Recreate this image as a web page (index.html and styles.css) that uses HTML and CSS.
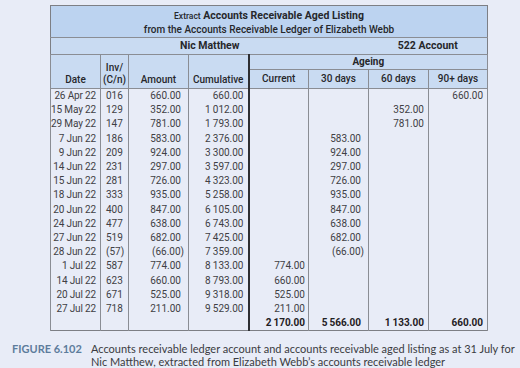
FILE: index.html
```html
<!DOCTYPE html>
<html>
<head>
<meta charset="utf-8">
<link rel="stylesheet" href="styles.css">
</head>
<body>
<div class="page">
  <table class="ledger">
    <colgroup>
      <col class="c-date"><col class="c-inv"><col class="c-num"><col class="c-num"><col class="c-num"><col class="c-num"><col class="c-num"><col class="c-last">
    </colgroup>
    <thead>
      <tr class="t1"><th colspan="8"><span class="small">Extract</span> Accounts Receivable Aged Listing</th></tr>
      <tr class="t2"><th colspan="8">from the Accounts Receivable Ledger of Elizabeth Webb</th></tr>
      <tr class="acct"><th colspan="6">Nic Matthew</th><th colspan="2">522 Account</th></tr>
      <tr class="h1">
        <th rowspan="2" class="bottom">Date</th>
        <th rowspan="2" class="bottom">Inv/<br>(C/n)</th>
        <th rowspan="2" class="bottom">Amount</th>
        <th rowspan="2" class="bottom cum">Cumulative</th>
        <th colspan="4" class="ageing">Ageing</th>
      </tr>
      <tr class="h2"><th>Current</th><th>30 days</th><th>60 days</th><th>90+ days</th></tr>
    </thead>
    <tbody>
      <tr><td class="d">26 Apr 22</td><td class="i">016</td><td class="a">660.00</td><td class="cu">660.00</td><td class="cur"></td><td class="d30"></td><td class="d60"></td><td class="d90">660.00</td></tr>
      <tr><td class="d">15 May 22</td><td class="i">129</td><td class="a">352.00</td><td class="cu">1&thinsp;012.00</td><td class="cur"></td><td class="d30"></td><td class="d60">352.00</td><td class="d90"></td></tr>
      <tr><td class="d">29 May 22</td><td class="i">147</td><td class="a">781.00</td><td class="cu">1&thinsp;793.00</td><td class="cur"></td><td class="d30"></td><td class="d60">781.00</td><td class="d90"></td></tr>
      <tr><td class="d">7 Jun 22</td><td class="i">186</td><td class="a">583.00</td><td class="cu">2&thinsp;376.00</td><td class="cur"></td><td class="d30">583.00</td><td class="d60"></td><td class="d90"></td></tr>
      <tr><td class="d">9 Jun 22</td><td class="i">209</td><td class="a">924.00</td><td class="cu">3&thinsp;300.00</td><td class="cur"></td><td class="d30">924.00</td><td class="d60"></td><td class="d90"></td></tr>
      <tr><td class="d">14 Jun 22</td><td class="i">231</td><td class="a">297.00</td><td class="cu">3&thinsp;597.00</td><td class="cur"></td><td class="d30">297.00</td><td class="d60"></td><td class="d90"></td></tr>
      <tr><td class="d">15 Jun 22</td><td class="i">281</td><td class="a">726.00</td><td class="cu">4&thinsp;323.00</td><td class="cur"></td><td class="d30">726.00</td><td class="d60"></td><td class="d90"></td></tr>
      <tr><td class="d">18 Jun 22</td><td class="i">333</td><td class="a">935.00</td><td class="cu">5&thinsp;258.00</td><td class="cur"></td><td class="d30">935.00</td><td class="d60"></td><td class="d90"></td></tr>
      <tr><td class="d">20 Jun 22</td><td class="i">400</td><td class="a">847.00</td><td class="cu">6&thinsp;105.00</td><td class="cur"></td><td class="d30">847.00</td><td class="d60"></td><td class="d90"></td></tr>
      <tr><td class="d">24 Jun 22</td><td class="i">477</td><td class="a">638.00</td><td class="cu">6&thinsp;743.00</td><td class="cur"></td><td class="d30">638.00</td><td class="d60"></td><td class="d90"></td></tr>
      <tr><td class="d">27 Jun 22</td><td class="i">519</td><td class="a">682.00</td><td class="cu">7&thinsp;425.00</td><td class="cur"></td><td class="d30">682.00</td><td class="d60"></td><td class="d90"></td></tr>
      <tr><td class="d">28 Jun 22</td><td class="i">(57)</td><td class="a">(66.00<span class="cp">)</span></td><td class="cu">7&thinsp;359.00</td><td class="cur"></td><td class="d30">(66.00<span class="cp">)</span></td><td class="d60"></td><td class="d90"></td></tr>
      <tr><td class="d">1 Jul 22</td><td class="i">587</td><td class="a">774.00</td><td class="cu">8&thinsp;133.00</td><td class="cur">774.00</td><td class="d30"></td><td class="d60"></td><td class="d90"></td></tr>
      <tr><td class="d">14 Jul 22</td><td class="i">623</td><td class="a">660.00</td><td class="cu">8&thinsp;793.00</td><td class="cur">660.00</td><td class="d30"></td><td class="d60"></td><td class="d90"></td></tr>
      <tr><td class="d">20 Jul 22</td><td class="i">671</td><td class="a">525.00</td><td class="cu">9&thinsp;318.00</td><td class="cur">525.00</td><td class="d30"></td><td class="d60"></td><td class="d90"></td></tr>
      <tr><td class="d">27 Jul 22</td><td class="i">718</td><td class="a">211.00</td><td class="cu">9&thinsp;529.00</td><td class="cur">211.00</td><td class="d30"></td><td class="d60"></td><td class="d90"></td></tr>
      <tr class="total"><td class="d"></td><td class="i"></td><td class="a"></td><td class="cu"></td><td class="cur">2&thinsp;170.00</td><td class="d30">5&thinsp;566.00</td><td class="d60">1&thinsp;133.00</td><td class="d90">660.00</td></tr>
    </tbody>
  </table>
  <div class="caption">
    <span class="fig">FIGURE 6.102</span>
    <span class="text">Accounts receivable ledger account and accounts receivable aged listing as at 31 July for Nic Matthew, extracted from Elizabeth Webb’s accounts receivable ledger</span>
  </div>
</div>
</body>
</html>
```
FILE: styles.css
```css
html, body {
  margin: 0;
  padding: 0;
  background: #e8ecf7;
}
.page {
  width: 520px;
  height: 368px;
  padding: 5px 0 0 50px;
  box-sizing: border-box;
  font-family: Roboto, "Liberation Sans", sans-serif;
}
.ledger {
  border-collapse: collapse;
  table-layout: fixed;
  width: 437px;
  font-size: 10px;
  color: #404044;
  border: 1px solid #7d7f85;
}
.c-date { width: 50px; }
.c-inv { width: 28px; }
.c-num { width: 60px; }
.c-last { width: 59px; }

th {
  font-weight: 500;
  color: #26272b;
  padding: 0;
  text-align: center;
  line-height: 12px;
}
.t1 th, .t2 th {
  background: #bcd3f0;
  font-weight: 500;
}
.t1 th {
  height: 16px;
  vertical-align: bottom;
  font-weight: 700;
  font-size: 10.5px;
}
.t1 .small {
  font-size: 8.5px;
  font-weight: 500;
}
.t2 th {
  height: 15px;
  border-bottom: 1px solid #8a8d94;
}
.acct th {
  background: #c9dbf2;
  height: 16px;
  font-weight: 700;
  font-size: 10.5px;
  border-bottom: 1px solid #8a8d94;
}
.h1 th, .h2 th {
  background: #c9dbf2;
  border: 1px solid #8a8d94;
}
.h1 th.bottom {
  vertical-align: bottom;
  padding-bottom: 2px;
}
.h1 .ageing {
  height: 14px;
  font-weight: 700;
}
.h2 th {
  height: 18px;
}
th.cum, td.cu {
  border-right: 2px solid #2e2f33;
}

td {
  padding: 0;
  height: 14.2px;
  line-height: 14px;
  border-left: 1px solid #8a8d94;
  border-right: 1px solid #8a8d94;
  text-align: right;
  white-space: nowrap;
}
td.d { padding-right: 4px; letter-spacing: -0.15px; }
td.i { text-align: left; padding-left: 5px; }
td.a { padding-right: 7px; }
td.cu { padding-right: 4px; }
td.cur { padding-right: 3px; }
td.d30 { padding-right: 7px; }
td.d60 { padding-right: 4px; }
td.d90 { padding-right: 4px; }
.cp { margin-right: -3px; }
tr.total td {
  font-weight: 700;
  color: #1f2024;
  height: 14px;
  vertical-align: top;
}

.caption {
  display: flex;
  margin: 12px 0 0 -38px;
  font-family: Lato, "Noto Sans", sans-serif;
  font-size: 11px;
  line-height: 12.5px;
  color: #3a3b3f;
}
.caption .fig {
  flex: none;
  width: 79px;
  color: #5d7c9c;
  font-weight: 700;
}
.caption .text {
  width: 430px;
}
```
